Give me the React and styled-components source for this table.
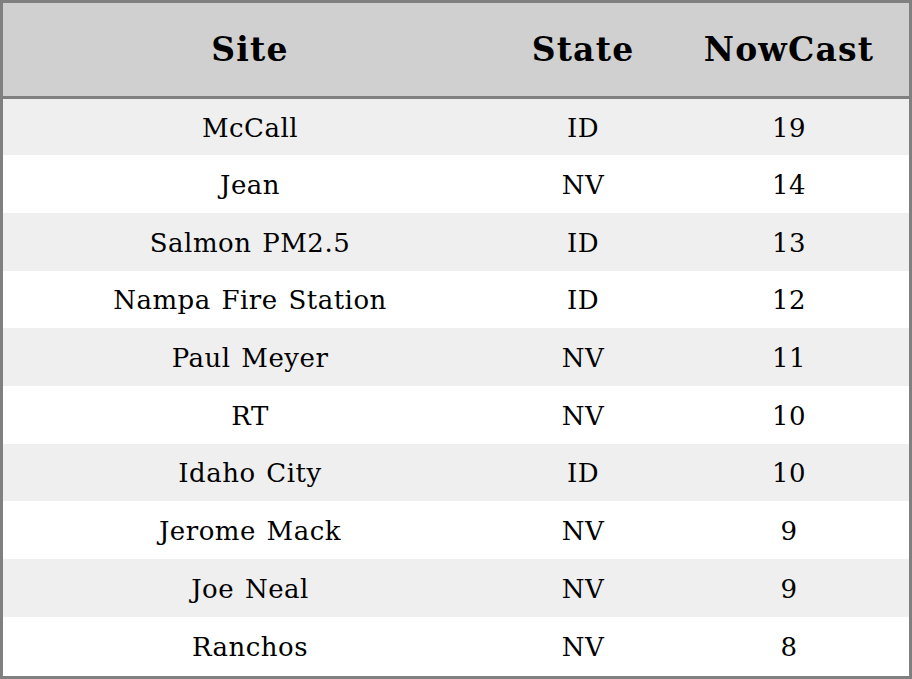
import React from 'react'
import styled, { createGlobalStyle } from 'styled-components'

const rows = [
  { site: 'McCall', state: 'ID', nowcast: 19 },
  { site: 'Jean', state: 'NV', nowcast: 14 },
  { site: 'Salmon PM2.5', state: 'ID', nowcast: 13 },
  { site: 'Nampa Fire Station', state: 'ID', nowcast: 12 },
  { site: 'Paul Meyer', state: 'NV', nowcast: 11 },
  { site: 'RT', state: 'NV', nowcast: 10 },
  { site: 'Idaho City', state: 'ID', nowcast: 10 },
  { site: 'Jerome Mack', state: 'NV', nowcast: 9 },
  { site: 'Joe Neal', state: 'NV', nowcast: 9 },
  { site: 'Ranchos', state: 'NV', nowcast: 8 },
]

const GlobalStyle = createGlobalStyle`
  html, body {
    margin: 0;
    padding: 0;
    background: #ffffff;
  }
  body {
    font-family: "DejaVu Serif", serif;
  }
`

const Wrapper = styled.div`
  width: 912px;
  height: 679px;
  box-sizing: border-box;
  border: 3px solid #808080;
  overflow: hidden;
`

const Table = styled.table`
  width: 100%;
  border-collapse: collapse;
  table-layout: fixed;
`

const HeadCell = styled.th`
  height: 93px;
  padding: 0;
  background: #d0d0d0;
  border-bottom: 3px solid #808080;
  font-size: 33px;
  font-weight: bold;
  letter-spacing: 1.2px;
  color: #000;
  text-align: center;
  width: ${props => props.w}px;
`

const Row = styled.tr`
  height: 57.7px;
  background: ${props => props.odd ? '#efefef' : '#ffffff'};
`

const Cell = styled.td`
  padding: 2px 0 0;
  text-align: center;
  font-size: 26px;
  letter-spacing: 0.5px;
  word-spacing: 2px;
  color: #000;
`

const App = () => {
  return (
    <>
      <GlobalStyle />
      <Wrapper>
        <Table>
          <thead>
            <tr>
              <HeadCell w={494}>Site</HeadCell>
              <HeadCell w={172}>State</HeadCell>
              <HeadCell w={240}>NowCast</HeadCell>
            </tr>
          </thead>
          <tbody>
            {rows.map((r, i) => (
              <Row key={i} odd={i % 2 === 0}>
                <Cell>{r.site}</Cell>
                <Cell>{r.state}</Cell>
                <Cell>{r.nowcast}</Cell>
              </Row>
            ))}
          </tbody>
        </Table>
      </Wrapper>
    </>
  )
}

export default App
